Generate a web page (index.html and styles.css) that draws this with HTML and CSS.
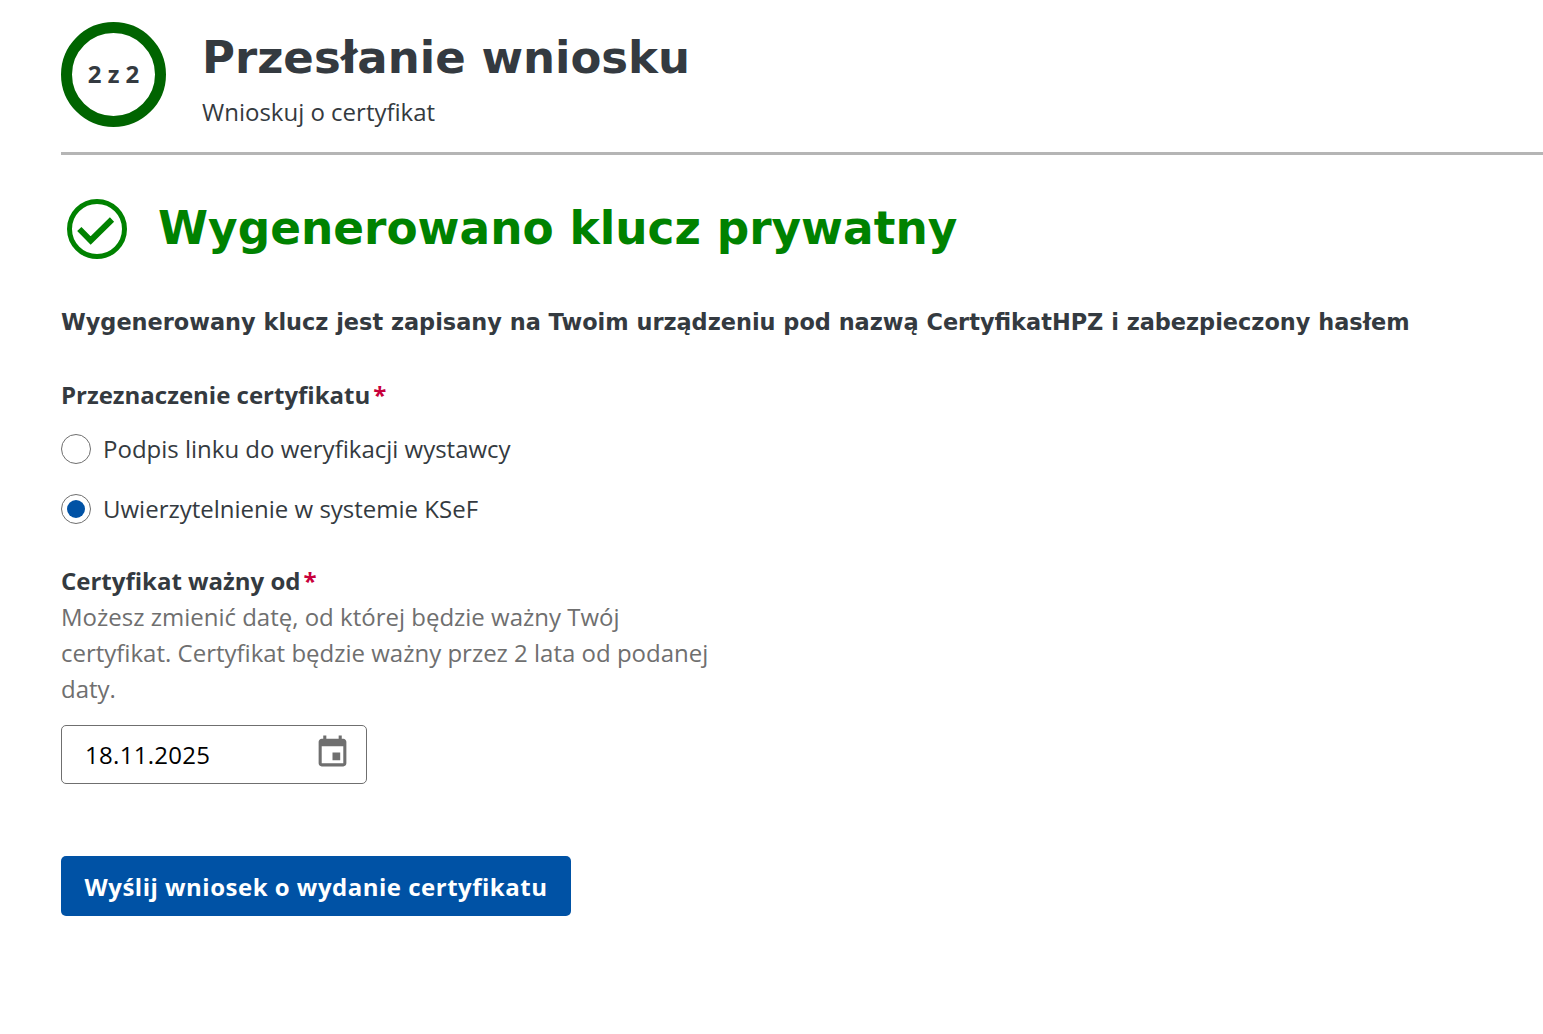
FILE: index.html
```html
<!DOCTYPE html>
<html lang="pl">

<head>
  <meta charset="UTF-8">
  <meta name="viewport" content="width=device-width, initial-scale=1.0">
  <title>Przesłanie wniosku</title>
  <link rel="stylesheet" href="styles.css">
</head>

<body>
  <header class="step-header">
    <div class="step-circle">2 z 2</div>
    <div class="step-text">
      <h1>Przesłanie wniosku</h1>
      <p>Wnioskuj o certyfikat</p>
    </div>
  </header>

  <main class="content">
    <div class="success">
      <svg class="success-icon" viewBox="0 0 60 60" width="60" height="60" aria-hidden="true">
        <circle cx="30" cy="30" r="27.5" fill="none" stroke="#008200" stroke-width="5"></circle>
        <path d="M12.3 30 L23.7 41.5 L45 20.5" fill="none" stroke="#008200" stroke-width="6"></path>
      </svg>
      <h2>Wygenerowano klucz prywatny</h2>
    </div>

    <p class="lead">Wygenerowany klucz jest zapisany na Twoim urządzeniu pod nazwą CertyfikatHPZ i zabezpieczony hasłem</p>

    <form>
      <div class="field-label">Przeznaczenie certyfikatu<span class="req">*</span></div>
      <div class="radios">
        <label class="radio">
          <input type="radio" name="purpose">
          <span class="radio-mark"></span>
          Podpis linku do weryfikacji wystawcy
        </label>
        <label class="radio">
          <input type="radio" name="purpose" checked>
          <span class="radio-mark"></span>
          Uwierzytelnienie w systemie KSeF
        </label>
      </div>

      <div class="field-label date-label">Certyfikat ważny od<span class="req">*</span></div>
      <p class="hint">Możesz zmienić datę, od której będzie ważny Twój certyfikat. Certyfikat będzie ważny przez 2 lata od podanej daty.</p>

      <div class="date-input">
        <span>18.11.2025</span>
        <svg viewBox="0 0 24 24" width="37" height="37" aria-hidden="true">
          <path fill="#6f6f6f" d="M17 12h-5v5h5v-5zM16 1v2H8V1H6v2H5c-1.11 0-1.99.9-1.99 2L3 19c0 1.1.89 2 2 2h14c1.1 0 2-.9 2-2V5c0-1.1-.9-2-2-2h-1V1h-2zm3 18H5V8h14v11z"></path>
        </svg>
      </div>

      <button class="btn" type="button">Wyślij wniosek o wydanie certyfikatu</button>
    </form>
  </main>
</body>

</html>
```

FILE: styles.css
```css
body {
  margin: 0;
  padding: 22px 0 0 61px;
  font-family: "Open Sans", sans-serif;
  color: #343a40;
  background-color: #fff;
}
h1, h2, p {
  margin: 0;
}
.step-header {
  display: flex;
  gap: 36px;
  height: 130px;
  border-bottom: 3px solid #b5b5b5;
}
.step-circle {
  box-sizing: border-box;
  width: 105px;
  height: 105px;
  padding-bottom: 3px;
  border: 11px solid #006400;
  border-radius: 50%;
  display: flex;
  align-items: center;
  justify-content: center;
  font-size: 24px;
  font-weight: 700;
}
.step-text h1 {
  font-family: "DejaVu Sans", sans-serif;
  font-size: 45px;
  line-height: 72px;
  font-weight: 700;
}
.step-text p {
  font-size: 24px;
  line-height: 36px;
}
.success {
  display: flex;
  align-items: center;
  gap: 31px;
  margin: 44px 0 0 6px;
}
.success h2 {
  font-family: "DejaVu Sans", sans-serif;
  font-size: 45.4px;
  line-height: 56px;
  font-weight: 700;
  color: #008200;
}
.lead {
  font-family: "DejaVu Sans", sans-serif;
  font-size: 22.43px;
  line-height: 36px;
  font-weight: 700;
  margin-top: 45px;
}
.field-label {
  font-size: 24px;
  line-height: 36px;
  font-weight: 700;
  margin-top: 37px;
}
.req {
  color: #c8003c;
  margin-left: 3px;
}
.radios {
  margin-top: 17px;
}
.radio {
  display: flex;
  align-items: center;
  gap: 12px;
  height: 36px;
  margin-bottom: 24px;
  font-size: 24px;
}
.radio input {
  display: none;
}
.radio-mark {
  box-sizing: border-box;
  width: 30px;
  height: 30px;
  margin-top: 2px;
  border: 1px solid #6f6f6f;
  border-radius: 50%;
  display: flex;
  align-items: center;
  justify-content: center;
}
.radio input:checked + .radio-mark::after {
  content: "";
  width: 18px;
  height: 18px;
  border-radius: 50%;
  background-color: #0052a5;
}
.date-label {
  margin-top: 37px;
}
.hint {
  width: 660px;
  font-size: 24px;
  line-height: 36px;
  color: #6f6f6f;
}
.date-input {
  box-sizing: border-box;
  width: 306px;
  height: 59px;
  margin-top: 18px;
  padding: 0 15px 0 23px;
  border: 1px solid #6f6f6f;
  border-radius: 5px;
  display: flex;
  align-items: center;
  justify-content: space-between;
  font-size: 24px;
  letter-spacing: 0.3px;
  color: #000;
}
.date-input svg {
  margin-bottom: 4px;
}
.btn {
  display: block;
  width: 510px;
  height: 60px;
  margin-top: 72px;
  padding: 0;
  background-color: #0052a5;
  color: white;
  border: none;
  border-radius: 5px;
  font-family: "Open Sans", sans-serif;
  font-size: 24px;
  font-weight: 700;
  letter-spacing: 0.5px;
  cursor: pointer;
}
```
